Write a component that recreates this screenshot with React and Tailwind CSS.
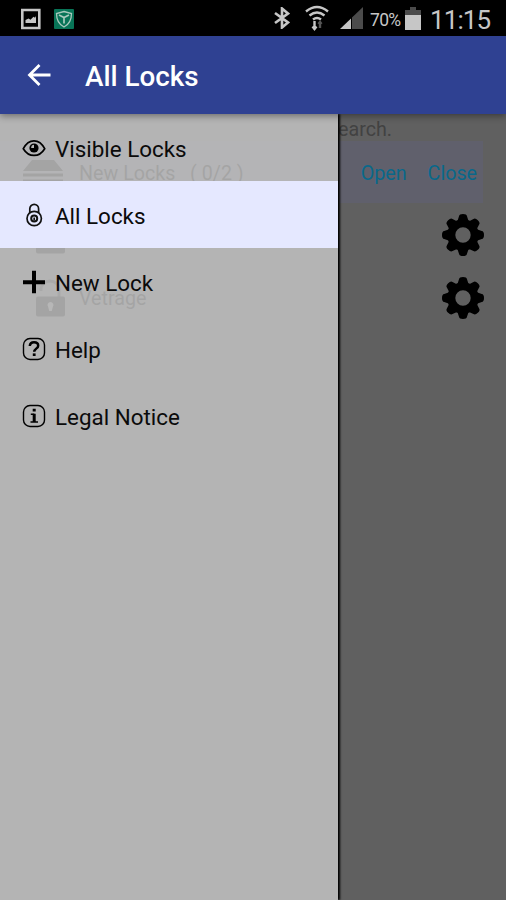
import clsx from "clsx";

function Gear() {
  return (
    <svg viewBox="-21 -21 42 42" className="h-[42px] w-[42px]">
      <g fill="#000">
        {[0, 45, 90, 135, 180, 225, 270, 315].map((angle) => (
          <path key={angle} transform={`rotate(${angle})`} d="M-7 -12Q-4.8 -15 -4 -18.8Q-3.7 -21 0 -21Q3.7 -21 4 -18.8Q4.8 -15 7 -12Z" />
        ))}
      </g>
      <circle r="11.7" fill="none" stroke="#000" strokeWidth="8" />
    </svg>
  );
}

function Padlock() {
  return (
    <svg viewBox="0 0 30 40" className="ml-[35px] h-10 w-[30px]">
      <path d="M6 13v-2a9 8 0 0 1 18 0v9" fill="none" stroke="#202020" strokeWidth="3" />
      <rect x="1" y="18.5" width="29" height="20" rx="2" fill="#000" />
      <path d="M15.5 24a3 3 0 0 1 2.4 4.8L16.8 33h-2.6l-1.1-4.2A3 3 0 0 1 15.5 24Z" fill="#707070" />
    </svg>
  );
}

const eye = (
  <svg viewBox="0 0 24 24" className="h-6 w-6">
    <path d="M1.3 12.7C4 7.4 8 4.8 12 4.8s8 2.6 10.7 7.9C20 17.2 16 19.4 12 19.4s-8-2.2-10.7-6.7Z" fill="none" stroke="#000" strokeWidth="1.7" />
    <circle cx="12" cy="12" r="4.6" />
    <path d="M9.2 12a3 3 0 0 1 2.8-3.2V12Z" fill="#b4b4b4" />
  </svg>
);

const lock = (
  <svg viewBox="0 0 24 24" className="h-6 w-6" fill="none" stroke="#111" strokeWidth="1.7">
    <circle cx="12.2" cy="15.5" r="7.2" />
    <circle cx="12.2" cy="15.5" r="3" strokeWidth="2" />
    <path d="M7.8 10V5.8a4.4 4.4 0 0 1 8.8 0V10M12.2 14.5v3" />
  </svg>
);

const plus = (
  <svg viewBox="0 0 24 24" className="h-6 w-6">
    <path d="M10 .8h4v9.4h9v4h-9v9h-4v-9H1v-4h9Z" />
  </svg>
);

const help = (
  <svg viewBox="0 0 24 24" className="h-6 w-6" fill="none" stroke="#000">
    <rect x="1.5" y="1.5" width="21" height="21" rx="6.5" strokeWidth="1.4" />
    <path d="M7.8 9c.2-2.7 1.9-3.7 4.2-3.7s4.2 1.2 4.2 3.4c0 2.9-4 3-4 6.1" strokeWidth="2.5" />
    <path d="M12.2 16.4v2.6" strokeWidth="2.8" />
  </svg>
);

const info = (
  <svg viewBox="0 0 24 24" className="h-6 w-6" fill="none" stroke="#000">
    <rect x="1.5" y="1.5" width="21" height="21" rx="6.5" strokeWidth="1.4" />
    <path d="M12.2 4.8v2.8M12.2 9.7v8.4" strokeWidth="3" />
    <path d="M8.8 10.3h3.5M8.5 18h7.5" strokeWidth="1.6" />
  </svg>
);

const menu = [
  { label: "Visible Locks", icon: eye },
  { label: "All Locks", icon: lock, active: true },
  { label: "New Lock", icon: plus },
  { label: "Help", icon: help },
  { label: "Legal Notice", icon: info },
];

function StatusBar() {
  return (
    <div className="flex h-9 items-center bg-black pl-5 pr-[15px] text-[#c6c6c6]">
      <svg viewBox="0 0 22 22" className="mt-[2px] h-[22px] w-[22px]">
        <path d="M2.3 2h17v18h-17Z" fill="none" stroke="#c6c6c6" strokeWidth="2.6" />
        <path d="M5.5 15v-3l3-1.5 2 1.2 3-3 1.5 1L16 8v7Z" fill="#c6c6c6" />
      </svg>
      <svg viewBox="0 0 20 20" className="ml-3 mt-[2px] h-5 w-5">
        <rect width="20" height="20" rx="1" fill="#087457" />
        <path d="M10 2.5 17.5 4.5C17.5 11 15 15.5 10 18 5 15.5 2.5 11 2.5 4.5Z" fill="none" stroke="#a9c9bd" strokeWidth="1.3" />
        <path d="M5 6 10 8.5 15 6M10 8v6.5" fill="none" stroke="#a9c9bd" strokeWidth="1.7" />
      </svg>
      <svg viewBox="0 0 16 22" className="ml-auto h-[22px] w-4" fill="none" stroke="#c6c6c6" strokeWidth="2.6">
        <path d="m1 6 13 9.5-6 5V1.5l6 5L1 16" />
      </svg>
      <svg viewBox="0 0 24 26" className="ml-[15px] h-[26px] w-6" fill="none" stroke="#c6c6c6" strokeWidth="2.4">
        <path d="M1 6.5q11-9 22 0M4.5 10.5q7.5-6 15 0M8 14.5q4-3 8 0" />
        <path d="M9.5 16v8M7.5 21.5l2 2.5 2-2.5" />
        <path d="M15 23v-6M13.5 19l1.5-2 1.5 2" stroke="#555" />
      </svg>
      <svg viewBox="0 0 24 24" className="ml-[11px] h-6 w-6">
        <path d="M0 23 11 12.5V23Z" fill="#c6c6c6" />
        <path d="M12 23V11.5L23 1v22Z" fill="#4b4b4b" />
      </svg>
      <span className="ml-[6px] mt-1 w-[32px] whitespace-nowrap text-[17.5px] tracking-[-0.7px]">70%</span>
      <svg viewBox="0 0 16 24" className="ml-[3px] h-6 w-4">
        <path d="M5 1h6v3h5v6H0V4h5Z" fill="#4b4b4b" />
        <path d="M0 9h16v15H0Z" fill="#c6c6c6" />
      </svg>
      <span className="ml-[9px] mt-[3px] w-[61px] whitespace-nowrap text-[26px] leading-8 tracking-[-0.9px]">11:15</span>
    </div>
  );
}

// dimmed lock list behind the open drawer
function LockList() {
  return (
    <div className="h-full bg-[#606060] text-[19.7px]">
      <p className="h-[27px] pr-[114px] pt-1 text-right leading-6 text-[#424242]">earch.</p>
      <div className="mr-[23px] flex h-[62px] items-center bg-[#60606c] pl-[23px]">
        <svg viewBox="0 0 40 36" className="mt-2 h-9 w-10 fill-black">
          <path d="M9 2h22l9 11H0Z" />
          <path d="M0 17h40M0 23h40M0 29h40" stroke="#000" strokeWidth="3" />
        </svg>
        <span className="ml-4 mt-[3px] whitespace-pre text-black">{"New Locks   ( 0/2 )"}</span>
        <span className="ml-auto mt-[3px] text-[#09688a]">Open</span>
        <span className="ml-[21px] mr-1.5 mt-[3px] text-[#09688a]">Close</span>
      </div>
      {["", "Vetrage"].map((name) => (
        <div key={name} className="flex h-[63px] items-center pr-[22px]">
          <Padlock />
          <span className="ml-[14px] mt-[3px] text-black">{name}</span>
          <div className="ml-auto">
            <Gear />
          </div>
        </div>
      ))}
    </div>
  );
}

export default function App() {
  return (
    <div className="flex h-[900px] w-[506px] flex-col overflow-hidden font-['Roboto',sans-serif]">
      <StatusBar />
      <header className="z-20 flex h-[78px] items-center bg-[#2f4192] pl-[27px] text-white shadow-[0_2px_7px_rgba(0,0,0,0.4)]">
        <svg viewBox="0 0 24 24" className="h-6 w-6" fill="none" stroke="#fff" strokeWidth="2.8">
          <path d="M12.5 2 2.5 12l10 10M2.5 12h21" />
        </svg>
        <h1 className="ml-[34px] mt-[3px] text-[27.8px] font-medium">All Locks</h1>
      </header>
      <main className="relative min-h-0 flex-1">
        <LockList />
        <nav className="absolute inset-y-0 left-0 w-[338px] bg-[#c5c5c5]/83 shadow-[2px_0_2px_#000]">
          {menu.map((item) => (
            <div
              key={item.label}
              className={clsx("flex h-[67px] items-center gap-[9px] pl-[22px] text-[22.4px] text-[#0b0b0b]", item.active && "bg-[#e5e8ff]")}
            >
              {item.icon}
              <span className="mt-1">{item.label}</span>
            </div>
          ))}
        </nav>
      </main>
    </div>
  );
}
